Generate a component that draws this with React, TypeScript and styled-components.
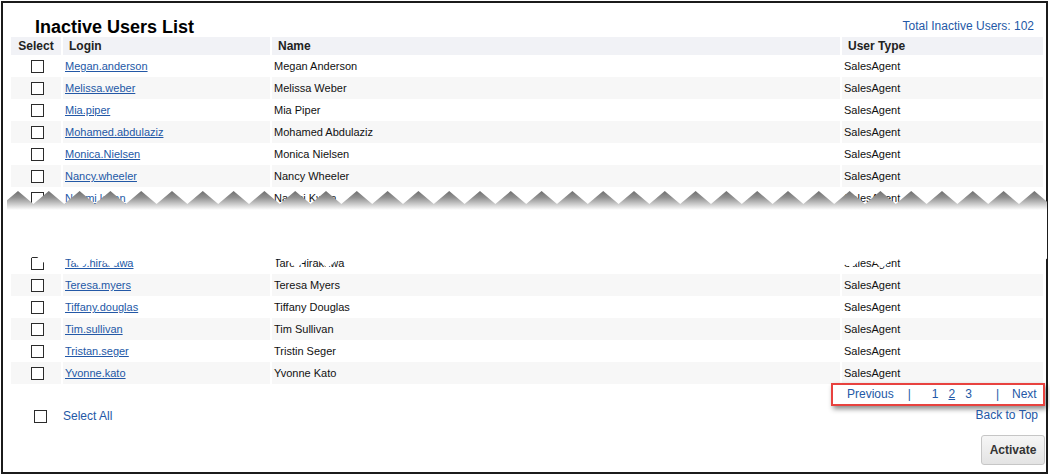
import styled, { createGlobalStyle } from "styled-components";

type User = { login: string; name: string; type: string };

const TOP_USERS: User[] = [
  { login: "Megan.anderson", name: "Megan Anderson", type: "SalesAgent" },
  { login: "Melissa.weber", name: "Melissa Weber", type: "SalesAgent" },
  { login: "Mia.piper", name: "Mia Piper", type: "SalesAgent" },
  { login: "Mohamed.abdulaziz", name: "Mohamed Abdulaziz", type: "SalesAgent" },
  { login: "Monica.Nielsen", name: "Monica Nielsen", type: "SalesAgent" },
  { login: "Nancy.wheeler", name: "Nancy Wheeler", type: "SalesAgent" },
];

const TORN_ABOVE: User = { login: "Naomi.kwan", name: "Naomi Kwan", type: "SalesAgent" };
const TORN_BELOW: User = { login: "Taro.hirakawa", name: "Taro Hirakawa", type: "SalesAgent" };

const BOTTOM_USERS: User[] = [
  { login: "Teresa.myers", name: "Teresa Myers", type: "SalesAgent" },
  { login: "Tiffany.douglas", name: "Tiffany Douglas", type: "SalesAgent" },
  { login: "Tim.sullivan", name: "Tim Sullivan", type: "SalesAgent" },
  { login: "Tristan.seger", name: "Tristin Seger", type: "SalesAgent" },
  { login: "Yvonne.kato", name: "Yvonne Kato", type: "SalesAgent" },
];

const LINK = "#2358a6";
const COLUMNS = "50px 207px 568px 201px";

const GlobalStyle = createGlobalStyle`
  html, body {
    margin: 0;
    padding: 0;
    background: #fff;
  }
  body {
    font-family: "Liberation Sans", Arial, sans-serif;
  }
`;

const Frame = styled.div`
  box-sizing: border-box;
  margin: 1px;
  width: 1047px;
  height: 473px;
  border: 2px solid #1b1b1b;
  padding: 0 3px 0 8px;
  display: flex;
  flex-direction: column;
`;

const TopBar = styled.div`
  display: flex;
  justify-content: space-between;
  align-items: flex-start;
  height: 34px;
  padding: 0 9px 0 24px;
`;

const Title = styled.h1`
  margin: 14px 0 0;
  font-size: 18px;
  line-height: 20px;
  font-weight: bold;
  color: #000;
`;

const Total = styled.div`
  margin-top: 16px;
  font-size: 12px;
  line-height: 14px;
  color: ${LINK};
`;

const HeaderRow = styled.div`
  display: grid;
  grid-template-columns: ${COLUMNS};
  column-gap: 2px;
  height: 18px;
`;

const HeaderCell = styled.div<{ $center?: boolean }>`
  background: #f1f2f6;
  font-size: 12px;
  font-weight: bold;
  line-height: 19px;
  color: #222;
  padding-left: ${(p) => (p.$center ? "0" : "6px")};
  text-align: ${(p) => (p.$center ? "center" : "left")};
`;

const Row = styled.div<{ $alt: boolean }>`
  display: grid;
  grid-template-columns: ${COLUMNS};
  column-gap: 2px;
  height: 22px;

  & > div {
    background: ${(p) => (p.$alt ? "#f7f7f7" : "#fff")};
  }
`;

const Cell = styled.div`
  display: flex;
  align-items: center;
  padding-left: 2px;
  font-size: 11px;
  line-height: 22px;
  color: #111;
  white-space: nowrap;
`;

const SelectCell = styled(Cell)`
  padding-left: 20px;
`;

const Checkbox = styled.span`
  display: inline-block;
  box-sizing: border-box;
  width: 13px;
  height: 13px;
  border: 1px solid #2b2b2b;
  background: #fff;
`;

const LoginLink = styled.a`
  color: ${LINK};
  text-decoration: underline;
  cursor: pointer;
`;

const TornSection = styled.div`
  position: relative;
`;

const TornGap = styled.div`
  height: 43px;
`;

const Tear = styled.svg`
  position: absolute;
  left: -4px;
  top: 0;
  pointer-events: none;
`;

const Footer = styled.div`
  display: flex;
  justify-content: space-between;
  align-items: flex-start;
`;

const SelectAll = styled.label`
  display: flex;
  align-items: center;
  gap: 16px;
  margin-top: 25px;
  padding-left: 23px;
  font-size: 12px;
  line-height: 14px;
  color: ${LINK};
`;

const Actions = styled.div`
  display: flex;
  flex-direction: column;
  align-items: flex-end;
`;

const Pager = styled.div`
  box-sizing: border-box;
  display: flex;
  align-items: center;
  width: 214px;
  height: 23px;
  margin: -1px -2px 0 0;
  padding-left: 14px;
  border: 2px solid #e8423f;
  box-shadow: 2px 3px 5px rgba(0, 0, 0, 0.45);
  font-size: 12px;
  line-height: 19px;
  color: ${LINK};
`;

const PagerItem = styled.span<{ $gap: number; $link?: boolean }>`
  margin-left: ${(p) => p.$gap}px;
  text-decoration: ${(p) => (p.$link ? "underline" : "none")};
`;

const BackToTop = styled.a`
  margin: 2px 5px 0 0;
  font-size: 12px;
  line-height: 14px;
  color: ${LINK};
`;

const ActivateButton = styled.button`
  box-sizing: border-box;
  width: 64px;
  height: 30px;
  margin: 13px -2px 0 0;
  border: 1px solid #c6c6c6;
  border-radius: 3px;
  background: linear-gradient(#f6f6f6, #e3e3e3);
  font-family: "Liberation Sans", Arial, sans-serif;
  font-size: 12px;
  font-weight: bold;
  color: #333;
  padding: 0;
`;

const UserRow = ({ user, alt }: { user: User; alt: boolean }) => (
  <Row $alt={alt}>
    <SelectCell>
      <Checkbox />
    </SelectCell>
    <Cell>
      <LoginLink>{user.login}</LoginLink>
    </Cell>
    <Cell>{user.name}</Cell>
    <Cell>{user.type}</Cell>
  </Row>
);

// torn-paper break drawn over the rows that were cut out of the screenshot
const TornEdge = () => {
  const step = 30.8;
  const upper: string[] = ["0,13.3"];
  for (let x = 11; x < 1060; x += step) {
    upper.push(`${x.toFixed(1)},4`, `${(x + step / 2).toFixed(1)},17`);
  }
  const lower: string[] = [];
  for (let x = 27.8 - step; x < 1060; x += step) {
    lower.push(`${x.toFixed(1)},68`, `${(x + step / 2).toFixed(1)},81`);
  }
  const points = [...upper, ...lower.reverse()].join(" ");

  return (
    <Tear width={1040} height={90} viewBox="0 0 1040 90">
      <defs>
        <linearGradient id="tearShade" gradientUnits="userSpaceOnUse" x1="0" y1="4" x2="0" y2="23">
          <stop offset="0" stopColor="#6f6f6f" />
          <stop offset="0.35" stopColor="#929292" />
          <stop offset="0.7" stopColor="#cdcdcd" />
          <stop offset="1" stopColor="#ffffff" />
        </linearGradient>
      </defs>
      <polygon points={points} fill="url(#tearShade)" />
    </Tear>
  );
};

const App = () => (
  <>
    <GlobalStyle />
    <Frame>
      <TopBar>
        <Title>Inactive Users List</Title>
        <Total>Total Inactive Users: 102</Total>
      </TopBar>

      <HeaderRow>
        <HeaderCell $center>Select</HeaderCell>
        <HeaderCell>Login</HeaderCell>
        <HeaderCell>Name</HeaderCell>
        <HeaderCell>User Type</HeaderCell>
      </HeaderRow>

      {TOP_USERS.map((user, i) => (
        <UserRow key={user.login} user={user} alt={i % 2 === 1} />
      ))}

      <TornSection>
        <UserRow user={TORN_ABOVE} alt={false} />
        <TornGap />
        <UserRow user={TORN_BELOW} alt={false} />
        <TornEdge />
      </TornSection>

      {BOTTOM_USERS.map((user, i) => (
        <UserRow key={user.login} user={user} alt={i % 2 === 0} />
      ))}

      <Footer>
        <SelectAll>
          <Checkbox />
          Select All
        </SelectAll>

        <Actions>
          <Pager>
            <PagerItem $gap={0}>Previous</PagerItem>
            <PagerItem $gap={14}>|</PagerItem>
            <PagerItem $gap={21}>1</PagerItem>
            <PagerItem $gap={10} $link>
              2
            </PagerItem>
            <PagerItem $gap={10}>3</PagerItem>
            <PagerItem $gap={24}>|</PagerItem>
            <PagerItem $gap={13}>Next</PagerItem>
          </Pager>
          <BackToTop>Back to Top</BackToTop>
          <ActivateButton>Activate</ActivateButton>
        </Actions>
      </Footer>
    </Frame>
  </>
);

export default App;
